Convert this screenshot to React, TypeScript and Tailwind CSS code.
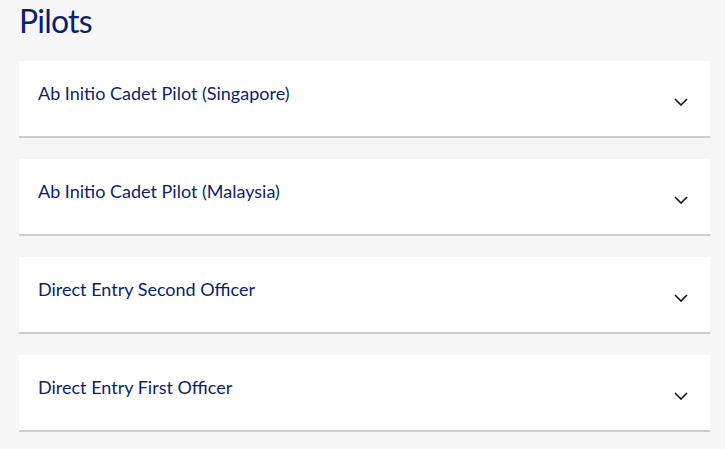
const roles = [
  "Ab Initio Cadet Pilot (Singapore)",
  "Ab Initio Cadet Pilot (Malaysia)",
  "Direct Entry Second Officer",
  "Direct Entry First Officer",
]

const Chevron = () => (
  <svg width="14" height="8" viewBox="0 0 14 8" fill="none">
    <path d="M1 1l6 6 6-6" stroke="#111" strokeWidth="1.6" />
  </svg>
)

export default function App() {
  return (
    <div className="min-h-[449px] bg-[#f6f6f6] pl-[19px] pr-[15px] font-['Lato',sans-serif]">
      <h1 className="pt-[1px] text-[32px] leading-[40px] tracking-[-0.8px] text-[#0a1f6e]">Pilots</h1>
      <div className="mt-[20px] flex flex-col gap-[21px]">
        {roles.map((role) => (
          <div
            key={role}
            className="flex h-[77px] items-center justify-between border-b-2 border-[#cdcdcd] bg-white pl-[19px] pr-[22px]"
          >
            <span className="-mt-[10px] text-[18px] text-[#0a1f6e]">{role}</span>
            <span className="mt-[6px]">
              <Chevron />
            </span>
          </div>
        ))}
      </div>
    </div>
  )
}
